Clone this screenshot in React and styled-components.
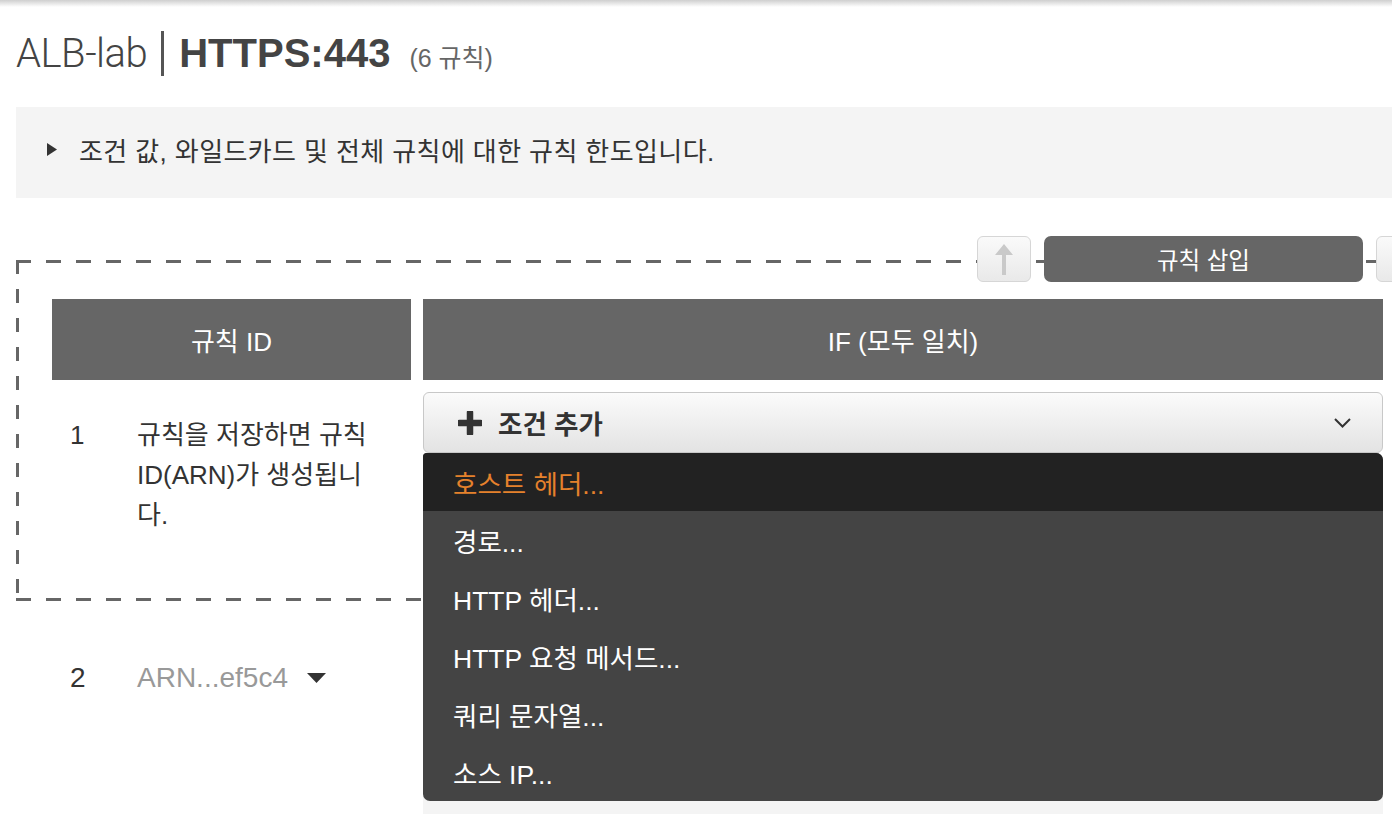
import React from 'react';
import styled, { createGlobalStyle } from 'styled-components';

const GlobalStyle = createGlobalStyle`
  html {
    overflow: hidden;
  }
  body {
    margin: 0;
    padding: 0;
    background: #fff;
    font-family: 'Liberation Sans', 'Noto Sans CJK KR', sans-serif;
    color: #333;
  }
`;

const Shade = styled.div`
  height: 7px;
  width: 100%;
  background: linear-gradient(#cfcfcf, rgba(255, 255, 255, 0));
`;

const Main = styled.div`
  width: 1444px;
  padding: 0 0 0 16px;
`;

const Title = styled.h1`
  margin: 0;
  padding-top: 23px;
  height: 46px;
  line-height: 46px;
  display: flex;
  align-items: baseline;
  font-weight: normal;
  font-size: 40px;
  color: #444;
  white-space: nowrap;
`;

const Light = styled.span`
  font-family: Roboto, 'Liberation Sans', sans-serif;
  font-weight: 300;
  letter-spacing: -0.5px;
`;

const Sep = styled.span`
  display: inline-block;
  width: 3px;
  height: 45px;
  background: #555;
  margin: 0 15px 0 14px;
  align-self: center;
`;

const Strong = styled.span`
  font-weight: bold;
  color: #444;
`;

const Count = styled.span`
  font-size: 25px;
  color: #666;
  margin-left: 19px;
`;

const Info = styled.div`
  margin-top: 31px;
  height: 91px;
  background: #f4f4f4;
  display: flex;
  align-items: center;
  padding: 0 0 6px 31px;
  box-sizing: border-box;
  font-size: 26px;
  letter-spacing: 0.4px;
  color: #333;
`;

const InfoText = styled.span`
  margin-left: 22px;
`;

const Frame = styled.div`
  position: relative;
  margin-top: 62px;
  padding: 39px 0 46px 36px;
  background:
    linear-gradient(to right, #666 50%, transparent 50%) left top / 30px 3px repeat-x,
    linear-gradient(to right, #666 50%, transparent 50%) left bottom / 30px 3px repeat-x,
    linear-gradient(to bottom, #666 50%, transparent 50%) left top / 3px 29px repeat-y;
`;

const Toolbar = styled.div`
  position: absolute;
  top: -24px;
  left: 961px;
  display: flex;
  gap: 13px;
`;

const IconButton = styled.button`
  width: 54px;
  height: 46px;
  padding: 0;
  border: 1px solid #d6d6d6;
  border-radius: 6px;
  background: linear-gradient(#fafafa, #e9e9e9);
  display: flex;
  align-items: center;
  justify-content: center;
`;

const PrimaryButton = styled.button`
  width: 319px;
  height: 46px;
  border: none;
  border-radius: 7px;
  background: #666;
  color: #fff;
  font-family: inherit;
  font-size: 23.5px;
`;

const Grid = styled.div`
  display: grid;
  grid-template-columns: 359px 960px;
  column-gap: 12px;
`;

const HeadCell = styled.div`
  height: 81px;
  background: #666;
  color: #fff;
  font-size: 26px;
  display: flex;
  align-items: center;
  justify-content: center;
`;

const Row = styled(Grid)`
  margin-top: 12px;
  margin-left: ${(p) => p.$indent || 0}px;
`;

const IdCell = styled.div`
  display: grid;
  grid-template-columns: 67px 250px;
  align-items: start;
  align-content: start;
  padding: ${(p) => p.$top}px 0 20px 18px;
  font-size: ${(p) => p.$size || 26}px;
  line-height: 40px;
  color: #333;
`;

const Num = styled.span``;

const Desc = styled.span`
  color: ${(p) => (p.$muted ? '#999' : '#333')};
`;

const CaretWrap = styled.span`
  display: inline-block;
  margin-left: 19px;
  vertical-align: middle;
  line-height: 0;
  position: relative;
  top: -2px;
`;

const CondCell = styled.div`
  position: relative;
  background: ${(p) => (p.$shaded ? '#f4f4f4' : 'transparent')};
  min-height: ${(p) => (p.$shaded ? 220 : 0)}px;
`;

const AddButton = styled.div`
  height: 59px;
  border: 1px solid #c8c8c8;
  border-radius: 6px;
  background: linear-gradient(#fbfbfb, #e3e3e3);
  display: flex;
  align-items: center;
  padding: 0 31px 0 34px;
  font-size: 26.5px;
  font-weight: bold;
  color: #333;
`;

const AddLabel = styled.span`
  margin-left: 16px;
  flex: 1;
`;

const Menu = styled.ul`
  position: absolute;
  top: 61px;
  left: 0;
  width: 960px;
  margin: 0;
  padding: 0;
  list-style: none;
  background: #444;
  border-radius: 4px 7px 7px 7px;
  overflow: hidden;
  z-index: 2;
`;

const MenuItem = styled.li`
  height: 58px;
  padding-left: 30px;
  display: flex;
  align-items: center;
  font-size: 26.5px;
  color: ${(p) => (p.$active ? '#e5812c' : '#fff')};
  background: ${(p) => (p.$active ? '#222' : 'transparent')};
`;

const Play = () => (
  <svg width="10" height="13" viewBox="0 0 10 13">
    <path d="M0 0 L10 6.5 L0 13 Z" fill="#333" />
  </svg>
);

const UpArrow = () => (
  <svg width="18" height="31" viewBox="0 0 18 31">
    <path d="M9 0 L18 11 L11 11 L11 31 L7 31 L7 11 L0 11 Z" fill="#c9c9c9" />
  </svg>
);

const Plus = () => (
  <svg width="24" height="24" viewBox="0 0 24 24">
    <path d="M12 1.5 V22.5 M1.5 12 H22.5" stroke="#333" strokeWidth="6.5" strokeLinecap="round" />
  </svg>
);

const Chevron = () => (
  <svg width="17" height="10" viewBox="0 0 17 10">
    <polyline points="1,1 8.5,8.5 16,1" fill="none" stroke="#333" strokeWidth="2" />
  </svg>
);

const Caret = () => (
  <svg width="19" height="10" viewBox="0 0 19 10">
    <path d="M0 0 L19 0 L9.5 10 Z" fill="#333" />
  </svg>
);

const options = ['호스트 헤더...', '경로...', 'HTTP 헤더...', 'HTTP 요청 메서드...', '쿼리 문자열...', '소스 IP...'];

export default function App() {
  return (
    <>
      <GlobalStyle />
      <Shade />
      <Main>
        <Title>
          <Light>ALB-lab</Light>
          <Sep />
          <Strong>HTTPS:443</Strong>
          <Count>(6 규칙)</Count>
        </Title>

        <Info>
          <Play />
          <InfoText>조건 값, 와일드카드 및 전체 규칙에 대한 규칙 한도입니다.</InfoText>
        </Info>

        <Frame>
          <Toolbar>
            <IconButton>
              <UpArrow />
            </IconButton>
            <PrimaryButton>규칙 삽입</PrimaryButton>
            <IconButton />
          </Toolbar>

          <Grid>
            <HeadCell>규칙 ID</HeadCell>
            <HeadCell>IF (모두 일치)</HeadCell>
          </Grid>

          <Row>
            <IdCell $top={23}>
              <Num>1</Num>
              <Desc>규칙을 저장하면 규칙 ID(ARN)가 생성됩니다.</Desc>
            </IdCell>
            <CondCell>
              <AddButton>
                <Plus />
                <AddLabel>조건 추가</AddLabel>
                <Chevron />
              </AddButton>
              <Menu>
                {options.map((o, i) => (
                  <MenuItem key={o} $active={i === 0}>
                    {o}
                  </MenuItem>
                ))}
              </Menu>
            </CondCell>
          </Row>
        </Frame>

        <Row $indent={36}>
          <IdCell $top={45} $size={28}>
            <Num>2</Num>
            <Desc $muted>
              ARN...ef5c4
              <CaretWrap>
                <Caret />
              </CaretWrap>
            </Desc>
          </IdCell>
          <CondCell $shaded />
        </Row>
      </Main>
    </>
  );
}
